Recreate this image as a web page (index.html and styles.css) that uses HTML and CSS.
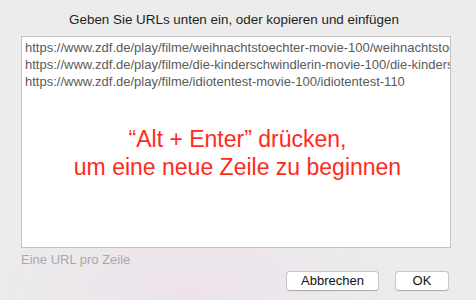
FILE: index.html
```html
<!DOCTYPE html>
<html lang="de">
<head>
<meta charset="utf-8">
<link rel="stylesheet" href="styles.css">
</head>
<body>
<div class="dialog">
  <div class="title">Geben Sie URLs unten ein, oder kopieren und einfügen</div>
  <div class="field">
    <div class="urls">
      <div class="url">https://www.zdf.de/play/filme/weihnachtstoechter-movie-100/weihnachtstoechter-102</div>
      <div class="url">https://www.zdf.de/play/filme/die-kinderschwindlerin-movie-100/die-kinderschwindlerin-102</div>
      <div class="url">https://www.zdf.de/play/filme/idiotentest-movie-100/idiotentest-110</div>
    </div>
    <div class="hint">“Alt + Enter” drücken,<br>um eine neue Zeile zu beginnen</div>
  </div>
  <div class="footer">
    <div class="note">Eine URL pro Zeile</div>
    <div class="buttons">
      <button class="btn btn-cancel">Abbrechen</button>
      <button class="btn btn-ok">OK</button>
    </div>
  </div>
</div>
</body>
</html>
```
FILE: styles.css
```css
html, body {
  margin: 0;
  padding: 0;
  width: 476px;
  height: 300px;
  overflow: hidden;
}
body {
  background: radial-gradient(ellipse 200px 120px at 190px 300px, #eee2ec 0%, #ececec 100%), #ececec;
  font-family: "Liberation Sans", Arial, sans-serif;
}
.dialog {
  padding: 11px 25px 0 21px;
  display: flex;
  flex-direction: column;
}
.title {
  font-size: 13.4px;
  line-height: 17px;
  color: #1e1e1e;
  text-align: center;
  margin-right: 4px;
  height: 25px;
}
.field {
  box-sizing: border-box;
  width: 430px;
  height: 212px;
  background: #fff;
  border: 1px solid #c2c2c2;
  overflow: hidden;
  padding: 2px 0 0 3px;
}
.urls {
  font-size: 13px;
  line-height: 17px;
  color: #5a5a5a;
  white-space: nowrap;
  overflow: hidden;
}
.hint {
  margin-top: 35px;
  text-align: center;
  color: #ff2a1c;
  font-size: 23px;
  line-height: 28px;
}
.footer {
  display: flex;
  flex-direction: column;
}
.note {
  font-size: 13px;
  line-height: 17px;
  color: #a9a9a9;
  margin-top: 3px;
}
.buttons {
  display: flex;
  justify-content: flex-end;
  gap: 16px;
  margin-top: 3px;
  margin-right: 2px;
}
.btn {
  font-family: "Liberation Sans", Arial, sans-serif;
  font-size: 13px;
  color: #111;
  background: #fff;
  border: 1px solid #c6c6c6;
  border-bottom-color: #b0b0b0;
  border-radius: 4px;
  height: 20px;
  padding: 0;
  line-height: 18px;
  box-shadow: 0 0.5px 0.5px rgba(0,0,0,0.08);
}
.btn-cancel { width: 93px; }
.btn-ok { width: 54px; }
```
